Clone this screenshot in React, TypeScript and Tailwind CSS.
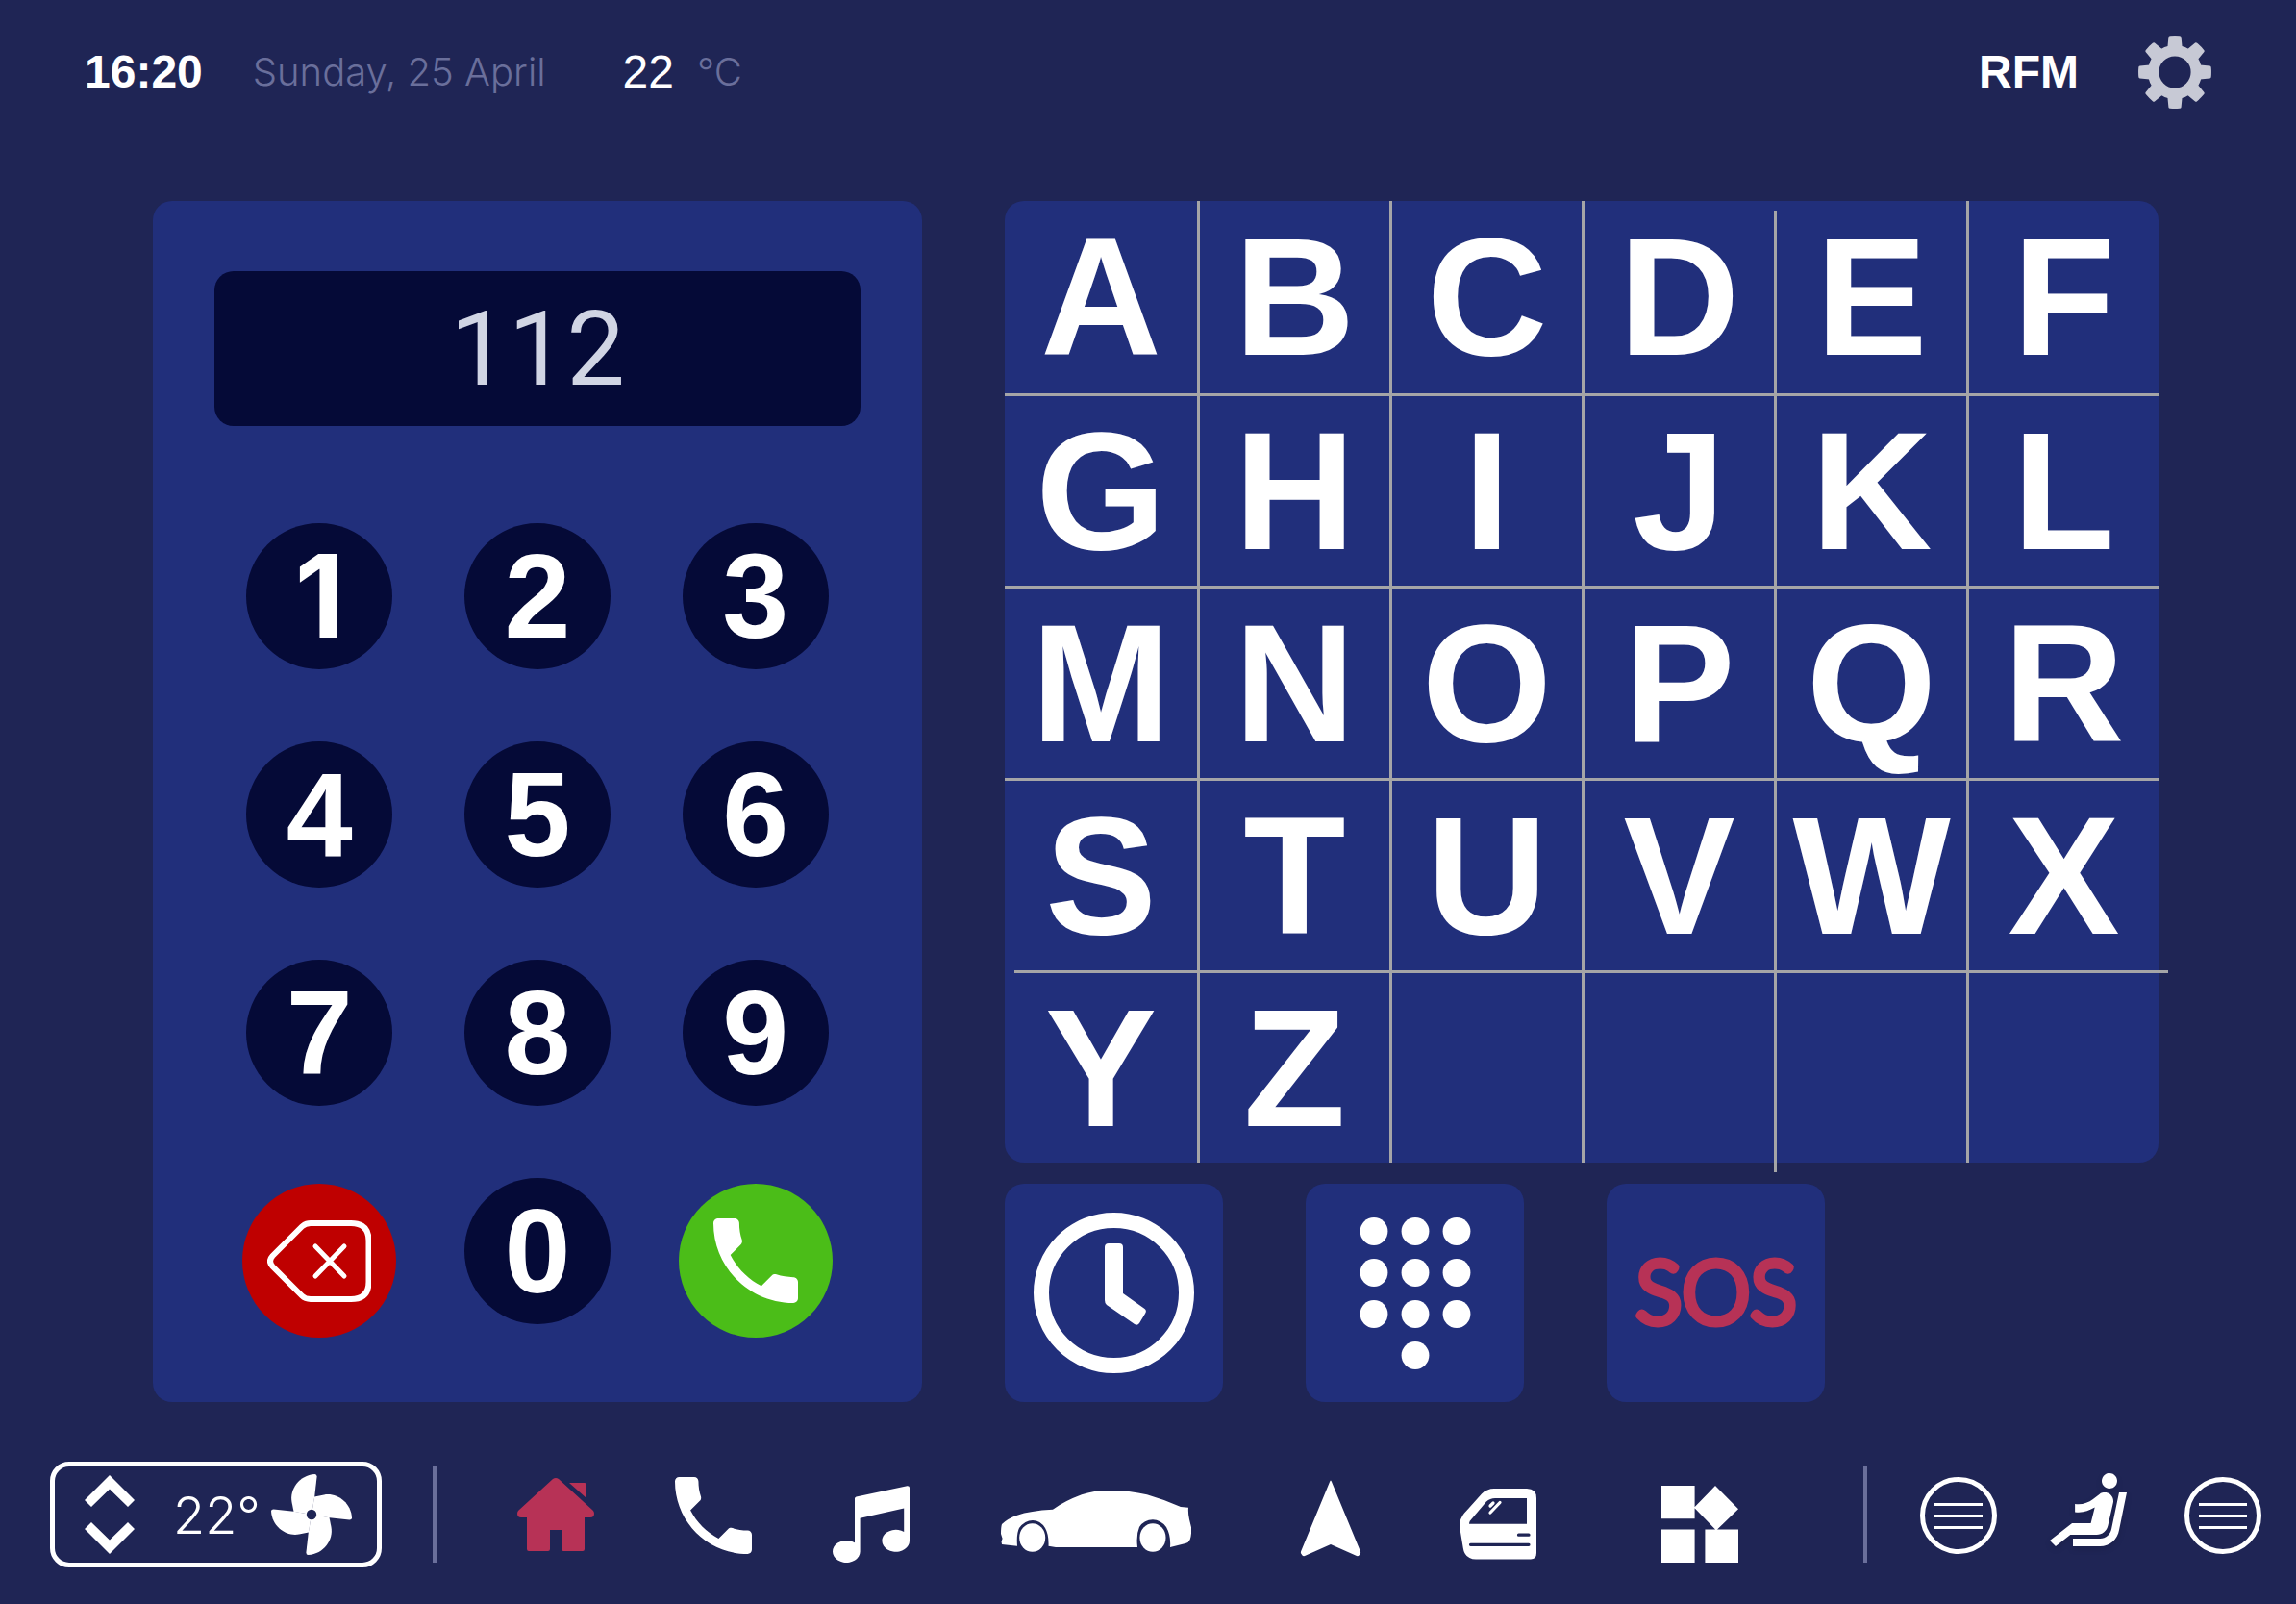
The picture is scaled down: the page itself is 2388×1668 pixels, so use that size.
import { useState, type ReactNode } from "react";

const LETTERS = "ABCDEFGHIJKLMNOPQRSTUVWXYZ".split("");
const CELLS = Array.from({ length: 30 }, (_, i) => LETTERS[i] ?? "");
const DIGITS = ["1", "2", "3", "4", "5", "6", "7", "8", "9"];
const CALL_PATH =
  "M6.62 10.79c1.44 2.83 3.76 5.14 6.59 6.59l2.2-2.2c.27-.27.67-.36 1.02-.24 1.12.37 2.33.57 3.57.57.55 0 1 .45 1 1V20c0 .55-.45 1-1 1-9.39 0-17-7.61-17-17 0-.55.45-1 1-1h3.5c.55 0 1 .45 1 1 0 1.25.2 2.45.57 3.57.11.35.03.74-.25 1.02l-2.2 2.2z";

function GearIcon() {
  return (
    <svg viewBox="-38 -38 76 76" className="size-[76px]" aria-hidden="true">
      <circle r="22.3" fill="none" stroke="#c7c9d5" strokeWidth="11.4" />
      {[0, 45, 90, 135, 180, 225, 270, 315].map((a) => (
        <path key={a} d="M-7.6-26L-6.6-36.4Q-6.4-37.6-5-37.7Q0-38.2 5-37.7Q6.4-37.6 6.6-36.4L7.6-26Z" fill="#c7c9d5" transform={`rotate(${a})`} />
      ))}
    </svg>
  );
}

function BackspaceIcon() {
  return (
    <svg viewBox="0 0 108 85" className="w-[108px]" fill="none" stroke="white" strokeWidth="6" strokeLinecap="round" aria-hidden="true">
      <path d="M45 3H87Q105.500 3 105.500 21V64Q105.500 82 87 82H45Q39.500 82 36 78.500L5.500 48Q0.500 42.500 5.500 37L36 6.500Q39.500 3 45 3Z" />
      <path d="M50 27L80 58M80 27L50 58" strokeWidth="5" />
    </svg>
  );
}

function ClockIcon() {
  return (
    <svg viewBox="0 0 167 167" className="w-[167px]" fill="white" aria-hidden="true">
      <circle cx="83.5" cy="83.5" r="75.5" fill="none" stroke="white" strokeWidth="16" />
      <path d="M78 32H89Q93 32 93 36V84L115.500 100Q118 102 116 105L110 115Q108 118 105 116L76 96Q74 94.500 74 91V36Q74 32 78 32Z" />
    </svg>
  );
}

function DialpadIcon() {
  const dots = [0, 1, 2].flatMap((r) => [0, 1, 2].map((c) => [c, r])).concat([[1, 3]]);
  return (
    <svg viewBox="0 0 116 158" className="w-[116px]" fill="white" aria-hidden="true">
      {dots.map(([c, r]) => (
        <circle key={`${c}-${r}`} cx={15 + c * 43} cy={14.5 + r * 43} r="14.4" />
      ))}
    </svg>
  );
}

function Chevron({ down = false }: { down?: boolean }) {
  return (
    <svg viewBox="0 0 52 33" className="w-[52px]" fill="white" aria-hidden="true">
      <path d={down ? "M26 33L52 7L45 0L26 18.500L7 0L0 7Z" : "M26 0L52 26L45 33L26 14.500L7 33L0 26Z"} />
    </svg>
  );
}

function FanIcon() {
  return (
    <svg viewBox="-42 -42 84 84" className="w-[84px]" fill="white" aria-hidden="true">
      {[0, 90, 180, 270].map((a) => (
        <path key={a} d="M0 0L3.2-18.500L5.600-39.500Q5.600-42 3.500-42C-13-41-23-26-20.500-13L-18.500-3Z" transform={`rotate(${a})`} />
      ))}
      <circle r="5.2" fill="#1f2555" />
    </svg>
  );
}

function HomeIcon() {
  return (
    <svg viewBox="0 -12 80 100" className="w-20" fill="#b73256" aria-hidden="true">
      <path d="M37 1Q40 -1 43 1L79 34Q80 35.500 80 37Q80 41 76 41H70V74Q70 76 68 76H48Q46 76 46 74V54H34V74Q34 76 32 76H12Q10 76 10 74V41H4Q0 41 0 37Q0 35.500 1 34Z" />
      <path d="M54 5H70Q72 5 72 7V21Z" />
    </svg>
  );
}

function PhoneIcon() {
  return (
    <svg viewBox="0 -11 80 100" className="w-20" fill="white" aria-hidden="true">
      <path d={CALL_PATH} transform="scale(4.444) translate(-3 -3)" />
    </svg>
  );
}

function MusicIcon() {
  return (
    <svg viewBox="0 -20 80 100" className="w-20" fill="white" aria-hidden="true">
      <path d="M23 13.500Q23 12 24.500 11.600L77.500 0.200Q80 0 80 2V57A14.300 11.500 0 1 1 74.200 48V23.500L28.600 33.700V68.500A14.300 11.500 0 1 1 23 59.300Z" />
    </svg>
  );
}

function CarIcon() {
  return (
    <svg viewBox="0 -25 198 100" className="w-[198px]" fill="white" aria-hidden="true">
      <path d="M1 35Q7 29 17 25.700Q30 21 54 19.700Q66 11 84 4.300Q96 0 113 0Q134 0 152 4.300Q170 9.500 187 17L195 17.700Q194.500 24 196 30L198 38.300Q198.500 46 196.700 51Q195.500 54 192 55L176 59Q177 47 172 38Q166 30.300 158 30.300Q149 30.300 144 38Q140.500 46 142 59H57L49.500 57.700Q50 46 46 39Q41 31 33 31Q25 31 19 39Q16 45 17 57.700L1 56L0.500 53L1.600 50L0 45Q0 38 1 35Z" />
      <ellipse cx="32.700" cy="49" rx="13.500" ry="14.800" />
      <ellipse cx="158" cy="49" rx="13.500" ry="14.800" />
    </svg>
  );
}

function NavigationIcon() {
  return (
    <svg viewBox="0 -14 64 100" className="w-16" fill="white" aria-hidden="true">
      <path d="M31 2Q32 -1 33 2L63 74.500Q63.500 76 62.500 77L61.500 78.500Q60.500 79.500 59 79L32 67L5 79Q3.500 79.500 2.500 78.500L1.500 77Q0.500 76 1 74.500Z" />
    </svg>
  );
}

function DoorIcon() {
  return (
    <svg viewBox="0 -23 80 100" className="w-20" aria-hidden="true">
      <path d="M36 0H70Q80 0 80 10V67Q80 73.500 74 73.500H17Q5.500 73 3.800 62L0.300 41Q-0.500 32 5 25.500L23 5.500Q28.500 0 36 0Z" fill="white" />
      <path d="M70 10H37Q31.500 10 28 13.500L11 33.500Q10 35 10 36.700H70Z" fill="#1f2555" />
      <g fill="none" strokeWidth="3.200" strokeLinecap="round">
        <path d="M61.500 48.200H72M11.500 58.300H72" stroke="#1f2555" />
        <path d="M32 25L42 14.500M32 18L35 15" stroke="white" />
      </g>
    </svg>
  );
}

function WidgetsIcon() {
  return (
    <svg viewBox="0 -20 80 100" className="w-20" fill="white" aria-hidden="true">
      <path d="M0 0H34.600V34.300H0ZM0 45.500H34.600V80H0ZM45.400 45.500H80V80H45.400ZM56 0L80 24.300L57 46.500L34 22.700Z" />
    </svg>
  );
}

function VentIcon() {
  return (
    <svg viewBox="0 -11 80 100" className="w-20" fill="none" stroke="white" aria-hidden="true">
      <circle cx="40" cy="40" r="37.500" strokeWidth="5" />
      <path d="M15 28.500H65M15 40.500H65M15 52.500H65" strokeWidth="3" />
    </svg>
  );
}

function SeatIcon() {
  return (
    <svg viewBox="2 0.250 20 25" className="w-20 drop-shadow-md" fill="white" aria-hidden="true">
      <g transform="translate(24 0) scale(-1 1)">
        <path d="M5.350 5.640c-.9-.64-1.120-1.880-.49-2.790.63-.9 1.880-1.120 2.790-.49.9.64 1.120 1.880.49 2.790-.64.9-1.880 1.120-2.790.49zM16 19H8.930c-1.480 0-2.740-1.080-2.960-2.540L4 7H2l1.990 9.760C4.370 19.200 6.470 21 8.940 21H16v-2zm.23-4h-4.880l-1.030-4.100c1.580.89 3.280 1.540 5.150 1.220V9.990c-1.630.31-3.440-.27-4.690-1.250L9.140 7.470c-.23-.18-.49-.3-.76-.38-.32-.09-.66-.12-.99-.06h-.02c-1.230.22-2.050 1.390-1.840 2.610l1.350 5.920C7.160 16.980 8.390 18 9.830 18h6.850l3.820 3 1.500-1.500-5.770-4.500z" />
      </g>
    </svg>
  );
}

const NAV: { label: string; icon: ReactNode; className: string }[] = [
  { label: "Home", icon: <HomeIcon />, className: "" },
  { label: "Phone", icon: <PhoneIcon />, className: "" },
  { label: "Music", icon: <MusicIcon />, className: "" },
  { label: "Car", icon: <CarIcon />, className: "pl-[11px] pr-[29px]" },
  { label: "Navigation", icon: <NavigationIcon />, className: "" },
  { label: "Doors", icon: <DoorIcon />, className: "pl-[18px] pr-[46px]" },
  { label: "Apps", icon: <WidgetsIcon />, className: "" },
];

function ShortcutButton({ label, children }: { label: string; children: ReactNode }) {
  return (
    <button type="button" aria-label={label} className="flex size-[227px] items-center justify-center rounded-[20px] bg-[#212f7b]">
      {children}
    </button>
  );
}

export default function App() {
  const [number, setNumber] = useState("112");
  const press = (key: string) => setNumber((n) => n + key);

  return (
    <div className="flex min-h-screen flex-col bg-[#1f2555] font-['Liberation_Sans',Arial,sans-serif] text-white">
      <header className="flex h-[149px] items-center justify-between px-[88px]">
        <div className="flex items-center">
          <time className="text-5xl font-bold">16:20</time>
          <span className="ml-[52px] font-['Inter',sans-serif] text-[40px] font-light text-[#6a6f9b]">Sunday, 25 April</span>
          <span className="ml-20 text-5xl">22</span>
          <span className="ml-6 font-['Inter',sans-serif] text-[40px] font-light text-[#6a6f9b]">°C</span>
        </div>
        <div className="flex items-center gap-[62px]">
          <span className="text-5xl font-bold">RFM</span>
          <button type="button" aria-label="Settings">
            <GearIcon />
          </button>
        </div>
      </header>

      <main className="grid grid-cols-[2fr_3fr] gap-[86px] pt-[60px] pr-[143px] pl-[159px]">
        <section aria-label="Dialer" className="min-w-0 rounded-[20px] bg-[#212f7b] px-15 pt-[73px]">
          <div className="px-1">
            <input
              aria-label="Phone number"
              value={number}
              onChange={(e) => setNumber(e.target.value)}
              className="block h-[161px] w-full rounded-[20px] bg-[#050a37] text-center font-['Roboto',sans-serif] text-[108px] leading-none text-[#d1d5e4] outline-none"
            />
          </div>
          <div className="mt-[101px] grid grid-cols-3 items-start justify-items-center gap-y-[75px]">
            {DIGITS.map((d) => (
              <button
                key={d}
                type="button"
                onClick={() => press(d)}
                className={`size-[152px] rounded-full bg-[#050a37] leading-none font-bold ${d === "1" ? "font-['Inter',sans-serif] text-[120px]" : "text-[124px]"}`}
              >
                {d}
              </button>
            ))}
            <button type="button" aria-label="Delete" onClick={() => setNumber((n) => n.slice(0, -1))} className="mt-1.5 flex size-40 items-center justify-center rounded-full bg-[#bf0000]">
              <BackspaceIcon />
            </button>
            <button type="button" onClick={() => press("0")} className="size-[152px] rounded-full bg-[#050a37] text-[124px] leading-none font-bold">
              0
            </button>
            <button type="button" aria-label="Call" className="mt-1.5 flex size-40 items-center justify-center rounded-full bg-[#4bbd18]">
              <svg viewBox="3 3 18 18" className="size-[88px]" fill="white" aria-hidden="true">
                <path d={CALL_PATH} />
              </svg>
            </button>
          </div>
        </section>

        <section aria-label="Contacts" className="flex min-w-0 flex-col gap-[22px]">
          <div className="relative grid aspect-[6/5] grid-cols-6 grid-rows-5 rounded-[20px] bg-[#212f7b]">
            {CELLS.map((letter, i) => {
              const col = i % 6;
              const row = Math.floor(i / 6);
              const left = col === 0 ? "" : col === 4 ? "border-l-[3px] border-l-transparent" : "border-l-[3px] border-l-[#a5a5a7]";
              const top = row === 0 ? "" : row === 4 ? "border-t-[3px] border-t-transparent" : "border-t-[3px] border-t-[#a5a5a7]";
              return (
                <button
                  key={i}
                  type="button"
                  aria-label={letter || "Empty"}
                  disabled={!letter}
                  className={`flex items-center justify-center text-[174px] leading-none font-bold ${left} ${top}`}
                >
                  {letter}
                </button>
              );
            })}
            <span className="absolute top-2.5 -bottom-2.5 left-2/3 w-[3px] bg-[#a5a5a7]" />
            <span className="absolute top-4/5 -right-2.5 left-2.5 h-[3px] bg-[#a5a5a7]" />
          </div>
          <div className="flex gap-[86px]">
            <ShortcutButton label="Recent calls">
              <ClockIcon />
            </ShortcutButton>
            <ShortcutButton label="Dial pad">
              <DialpadIcon />
            </ShortcutButton>
            <ShortcutButton label="SOS">
              <svg viewBox="0 0 200 140" className="w-[200px] overflow-visible">
                <text x="100" y="101" textAnchor="middle" fill="#b73256" stroke="#b73256" strokeWidth="8" strokeLinejoin="round" className="font-['Lato',sans-serif] text-[90px] font-light">
                  SOS
                </text>
              </svg>
            </ShortcutButton>
          </div>
        </section>
      </main>

      <footer className="mt-[62px] mb-9 flex items-center pr-9 pl-[52px]">
        <div className="flex h-[110px] w-[345px] items-center rounded-[20px] border-[5px] border-white pl-[31px]">
          <div className="flex flex-col gap-4">
            <button type="button" aria-label="Warmer">
              <Chevron />
            </button>
            <button type="button" aria-label="Cooler">
              <Chevron down />
            </button>
          </div>
          <span className="ml-10 w-[102px] font-['Inter',sans-serif] text-[54px] font-light">22°</span>
          <button type="button" aria-label="Fan">
            <FanIcon />
          </button>
        </div>
        <span className="ml-[53px] h-[100px] w-1 bg-[#6a6f9b]" />
        <nav className="mr-[130px] ml-[84px] flex flex-1 items-center justify-between">
          {NAV.map((item) => (
            <button key={item.label} type="button" aria-label={item.label} className={item.className}>
              {item.icon}
            </button>
          ))}
        </nav>
        <span className="h-[100px] w-1 bg-[#6a6f9b]" />
        <div className="ml-[55px] flex gap-[55px]">
          <button type="button" aria-label="Left vent">
            <VentIcon />
          </button>
          <button type="button" aria-label="Seat" className="pr-[5px]">
            <SeatIcon />
          </button>
          <button type="button" aria-label="Right vent">
            <VentIcon />
          </button>
        </div>
      </footer>
    </div>
  );
}
